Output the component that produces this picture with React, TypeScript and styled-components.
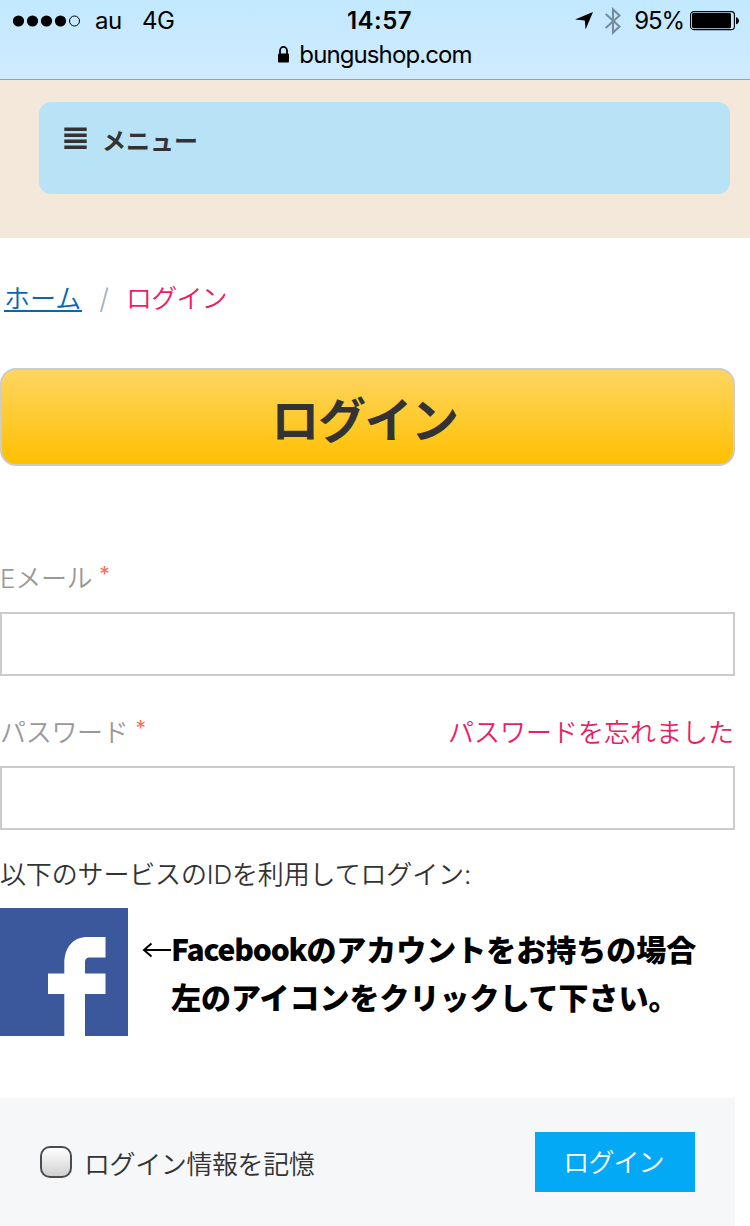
import React from "react";
import styled, { createGlobalStyle } from "styled-components";

const GlobalStyle = createGlobalStyle`
  *, *::before, *::after { box-sizing: border-box; }
  body {
    margin: 0;
    background: #fff;
    color: #333;
    font-family: "Inter", "Noto Sans CJK JP", sans-serif;
    font-size: 26px;
    font-weight: 350;
  }
`;

const Page = styled.div`
  width: 750px;
  height: 1226px;
  overflow: hidden;
  display: flex;
  flex-direction: column;
`;

const BrowserBar = styled.header`
  height: 80px;
  flex: none;
  background: linear-gradient(#c2e9ff, #c9eaff 55%, #d0ebff);
  border-bottom: 1px solid #9da1a3;
  color: #000;
  font-weight: 400;
  font-size: 24px;
`;

const StatusRow = styled.div`
  display: grid;
  grid-template-columns: 1fr auto 1fr;
  height: 41px;
  line-height: 42px;
  padding: 0 11px 0 12px;
`;

const StatusGroup = styled.div<{ $end?: boolean }>`
  display: flex;
  align-items: center;
  justify-content: ${(p) => (p.$end ? "flex-end" : "flex-start")};
`;

const StatusText = styled.span<{ $gap: number; $spacing?: number }>`
  margin-left: ${(p) => p.$gap}px;
  letter-spacing: ${(p) => p.$spacing ?? 0}px;
`;

const Clock = styled.span`
  padding-left: 8px;
  font-weight: 600;
  letter-spacing: 0.5px;
`;

const Bluetooth = styled.svg`
  margin-left: 12px;
`;

const Battery = styled.svg`
  margin-left: 6px;
`;

const AddressRow = styled.div`
  display: flex;
  align-items: center;
  justify-content: center;
  gap: 9px;
  height: 28px;
  line-height: 28px;
  letter-spacing: -0.9px;
`;

const Lock = styled.svg`
  margin: -2px 0 0 -1px;
`;

const MenuBand = styled.nav`
  flex: none;
  height: 158px;
  padding: 22px 20px 44px 39px;
  background: #f4e8da;
`;

const MenuButton = styled.button`
  display: flex;
  align-items: flex-start;
  gap: 15px;
  width: 100%;
  height: 92px;
  padding: 25px 25px 0;
  border: 0;
  border-radius: 12px;
  background: #b8e2f6;
  color: #333;
  font: 700 24px/26px "Noto Sans CJK JP", sans-serif;
`;

const Main = styled.main`
  width: 735px;
  display: flex;
  flex-direction: column;
`;

const Breadcrumb = styled.div`
  display: flex;
  height: 40px;
  margin-top: 40px;
  padding-left: 4px;
  line-height: 42px;
`;

const HomeLink = styled.a`
  width: 78px;
  height: 34px;
  border-bottom: 2px solid #0a66ad;
  color: #0a66ad;
`;

const Slash = styled.span`
  width: 44px;
  text-align: center;
  color: #a4aeb9;
  font-size: 28px;
`;

const Current = styled.span`
  color: #e91e63;
  letter-spacing: -0.8px;
`;

const Title = styled.h1`
  height: 98px;
  margin: 50px 0 0;
  padding-right: 6px;
  border: 2px solid #ccc;
  border-radius: 16px;
  background: linear-gradient(#fed661, #ffbf00);
  text-align: center;
  font-size: 48px;
  font-weight: 700;
  letter-spacing: -1.4px;
  line-height: 102px;
`;

const FieldHead = styled.div<{ $top: number }>`
  display: flex;
  justify-content: space-between;
  height: 40px;
  margin-top: ${(p) => p.$top}px;
  line-height: 42px;
`;

const Label = styled.label`
  display: flex;
  color: #999;
  letter-spacing: -0.3px;
`;

const Required = styled.span`
  margin-left: 7px;
  color: #f2705c;
  font-size: 21px;
  font-weight: 400;
  line-height: 34px;
`;

const ForgotLink = styled.a`
  padding-right: 1px;
  color: #e91e63;
`;

const Field = styled.input`
  width: 100%;
  height: 64px;
  margin-top: 14px;
  border: 2px solid #ccc;
  border-radius: 0;
  background: #fff;
`;

const ServiceText = styled.p`
  margin: 24px 0 0;
  height: 40px;
  line-height: 42px;
  letter-spacing: -0.15px;
  white-space: nowrap;
`;

const ServiceRow = styled.div`
  display: flex;
  height: 128px;
  margin-top: 14px;
`;

const Note = styled.div`
  display: flex;
  align-items: flex-start;
  padding: 16px 0 0 14px;
  color: #000;
  font: 900 30px/48px "Noto Sans CJK JP", sans-serif;
  white-space: nowrap;
`;

const Arrow = styled.svg`
  flex: none;
  margin-top: 18px;
`;

const NoteLatin = styled.span`
  letter-spacing: -1.2px;
`;

const SubmitBar = styled.footer`
  display: flex;
  align-items: flex-start;
  justify-content: space-between;
  height: 128px;
  margin-top: 62px;
  padding: 34px 40px 0;
  background: #f5f7f9;
`;

const Remember = styled.label`
  display: flex;
  align-items: center;
  gap: 12px;
  height: 60px;
`;

const CheckBox = styled.input`
  appearance: none;
  width: 32px;
  height: 32px;
  margin: 0;
  border: 2px solid #4c4c4c;
  border-radius: 10px;
  background: linear-gradient(#fff, #d0d0d0);
`;

const RememberText = styled.span`
  line-height: 40px;
  padding-top: 6px;
  letter-spacing: -0.4px;
`;

const Submit = styled.button`
  width: 160px;
  height: 60px;
  padding: 0 3px 2px 0;
  border: 0;
  background: #03a9f4;
  color: #fff;
  font: 350 26px/58px "Noto Sans CJK JP", sans-serif;
  letter-spacing: -0.9px;
`;

export default function App() {
  return (
    <Page>
      <GlobalStyle />
      <BrowserBar>
        <StatusRow>
          <StatusGroup>
            <svg width="70" height="12" viewBox="0 0 70 12">
              {[6.5, 20.5, 34.5, 48.5].map((x) => (
                <circle key={x} cx={x} cy="6" r="5.6" />
              ))}
              <circle cx="62.5" cy="6" r="5" fill="none" stroke="#000" />
            </svg>
            <StatusText $gap={13} $spacing={-0.4}>au</StatusText>
            <StatusText $gap={20} $spacing={-0.5}>4G</StatusText>
          </StatusGroup>
          <Clock>14:57</Clock>
          <StatusGroup $end>
            <svg width="18" height="18" viewBox="0 0 18 18">
              <path d="M18 0 10.6 17.6 9.8 8.4 0 7.4Z" />
            </svg>
            <Bluetooth width="16" height="28" viewBox="0 0 16 28">
              <path d="M.7 7 14.5 19.5 8 25.6V2.4l6.500 6.100L.7 21" fill="none" stroke="#768d9b" strokeWidth="2.100" />
            </Bluetooth>
            <StatusText $gap={13} $spacing={-1.1}>95%</StatusText>
            <Battery width="49" height="20" viewBox="0 0 49 20">
              <rect x=".6" y=".6" width="43.8" height="18" rx="3.2" fill="none" stroke="#000" strokeWidth="1.1" />
              <rect x="2" y="2" width="39" height="15.2" rx="1.4" />
              <path d="M46 6.2c4 1 4 6 0 7Z" />
            </Battery>
          </StatusGroup>
        </StatusRow>
        <AddressRow>
          <Lock width="13" height="17" viewBox="0 0 13 17">
            <path d="M3 8V4.700a3.500 3.800 0 0 1 7 0V8" fill="none" stroke="#000" strokeWidth="1.8" />
            <rect x="1" y="7.400" width="11" height="9" rx="1" />
          </Lock>
          <span>bungushop.com</span>
        </AddressRow>
      </BrowserBar>

      <MenuBand>
        <MenuButton>
          <svg width="23" height="23" viewBox="0 0 23 23" fill="#333">
            {[0.5, 6.5, 12.5, 18.5].map((y) => (
              <rect key={y} x="0.3" y={y} width="22.4" height="3.5" />
            ))}
          </svg>
          <span>メニュー</span>
        </MenuButton>
      </MenuBand>

      <Main>
        <Breadcrumb>
          <HomeLink>ホーム</HomeLink>
          <Slash>/</Slash>
          <Current>ログイン</Current>
        </Breadcrumb>

        <Title>ログイン</Title>

        <FieldHead $top={92}>
          <Label>
            Eメール<Required>*</Required>
          </Label>
        </FieldHead>
        <Field type="email" />

        <FieldHead $top={36}>
          <Label>
            パスワード<Required>*</Required>
          </Label>
          <ForgotLink>パスワードを忘れました</ForgotLink>
        </FieldHead>
        <Field type="password" />

        <ServiceText>以下のサービスのIDを利用してログイン:</ServiceText>
        <ServiceRow>
          <svg width="128" height="128" viewBox="0 0 128 128">
            <rect width="128" height="128" fill="#3a589b" />
            <path d="M64.300 128V86H48V65.500h16.300V56C64.300 39 73 29 88 29h17.500v20.500H90c-3.500 0-5 1.500-5 5v11h20.500V86H85v42Z" fill="#fff" />
          </svg>
          <Note>
            <Arrow width="29" height="16" viewBox="0 0 29 16">
              <path d="M29 8H2M9.500 1.500 2 8l7.500 6.500" fill="none" stroke="#000" strokeWidth="2" />
            </Arrow>
            <div>
              <NoteLatin>Facebook</NoteLatin>のアカウントをお持ちの場合
              <br />
              左のアイコンをクリックして下さい。
            </div>
          </Note>
        </ServiceRow>

        <SubmitBar>
          <Remember>
            <CheckBox type="checkbox" />
            <RememberText>ログイン情報を記憶</RememberText>
          </Remember>
          <Submit>ログイン</Submit>
        </SubmitBar>
      </Main>
    </Page>
  );
}
